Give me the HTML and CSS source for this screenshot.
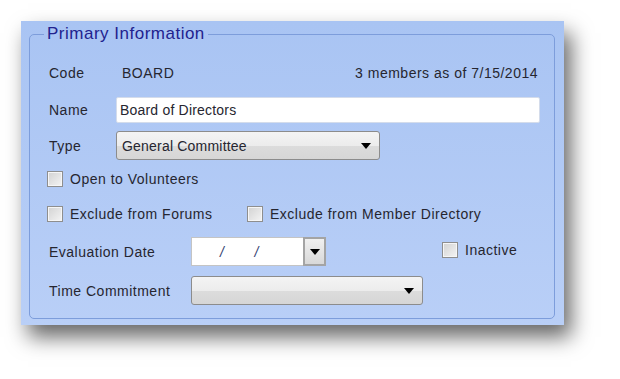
FILE: index.html
```html
<!DOCTYPE html>
<html lang="en">
<head>
    <meta charset="UTF-8">
    <title>Committee - Primary Information</title>
    <link rel="stylesheet" href="styles.css">
</head>
<body>

    <div class="panel">
        <fieldset class="group">
            <legend>Primary Information</legend>

            <div class="row row-code">
                <span class="label label-code">Code</span>
                <span class="value">BOARD</span>
                <span class="members">3 members as of 7/15/2014</span>
            </div>

            <div class="row row-name">
                <span class="label label-short">Name</span>
                <div class="textbox">Board of Directors</div>
            </div>

            <div class="row row-type">
                <span class="label label-short">Type</span>
                <div class="combo combo-type">
                    <span class="combo-text">General Committee</span>
                    <span class="arrow"></span>
                </div>
            </div>

            <div class="row row-open">
                <label class="check"><span class="box"></span>Open to Volunteers</label>
            </div>

            <div class="row row-exclude">
                <label class="check check-forums"><span class="box"></span>Exclude from Forums</label>
                <label class="check"><span class="box"></span>Exclude from Member Directory</label>
            </div>

            <div class="row row-eval">
                <span class="label label-long">Evaluation Date</span>
                <div class="datebox">
                    <div class="date-text"><span>/</span><span>/</span></div>
                    <div class="date-btn"><span class="arrow"></span></div>
                </div>
                <label class="check check-inactive"><span class="box"></span>Inactive</label>
            </div>

            <div class="row row-time">
                <span class="label label-long">Time Commitment</span>
                <div class="combo combo-time">
                    <span class="combo-text"></span>
                    <span class="arrow"></span>
                </div>
            </div>
        </fieldset>
    </div>

</body>
</html>
```

FILE: styles.css
```css
* {
    margin: 0;
    padding: 0;
    box-sizing: border-box;
}

html,
body {
    min-height: 100%;
}

body {
    font-family: 'Liberation Sans', Arial, sans-serif;
    font-size: 14px;
    letter-spacing: 0.5px;
    color: #262630;
    background: #fff;
    padding: 21px 0 0 21px;
    min-height: 100vh;
}

.panel {
    width: 543px;
    height: 304px;
    padding: 4px 9px 0 8px;
    background: linear-gradient(#a9c4f3, #b9cff7);
    box-shadow: 7px 12px 20px rgba(0, 0, 0, 0.6);
}

.group {
    height: 294px;
    border: 1px solid #7d9ddb;
    border-radius: 5px;
    padding: 0 0 0 17px;
}

.group legend {
    font-size: 17px;
    line-height: 18px;
    color: #22228e;
    padding: 0 3px;
    margin-left: -3px;
}

.row {
    display: flex;
    align-items: center;
}

.label {
    padding-left: 2px;
}

.label-short {
    width: 69px;
}

.label-code {
    width: 75px;
}

.label-long {
    width: 144px;
}

.row-code {
    height: 24px;
    margin-top: 18px;
}

.members {
    margin-left: auto;
    margin-right: 16px;
}

.row-name {
    margin-top: 12px;
}

.textbox {
    width: 424px;
    height: 26px;
    line-height: 24px;
    padding-left: 3px;
    background: #fff;
    border: 1px solid #d4dceb;
    border-radius: 2px;
    letter-spacing: 0.2px;
}

.row-type {
    margin-top: 8px;
}

.combo {
    display: flex;
    align-items: center;
    height: 29px;
    padding: 0 8px 0 5px;
    border: 1px solid #8c8c8c;
    border-radius: 3px;
    background: linear-gradient(#f4f4f4, #ececec 50%, #dcdcdc 51%, #d6d6d6);
    letter-spacing: 0.2px;
}

.combo-type {
    width: 264px;
}

.combo-time {
    width: 232px;
}

.combo-text {
    flex: 1;
}

.arrow {
    width: 0;
    height: 0;
    border-left: 5px solid transparent;
    border-right: 5px solid transparent;
    border-top: 6px solid #000;
}

.check {
    display: flex;
    align-items: center;
}

.box {
    width: 16px;
    height: 16px;
    margin-right: 7px;
    border: 1px solid #8e8e8e;
    box-shadow: inset 0 0 0 1px #f6f6f6;
    background: linear-gradient(135deg, #d2d2d2, #f4f4f4);
}

.row-open {
    height: 18px;
    margin-top: 10px;
}

.row-exclude {
    height: 18px;
    margin-top: 17px;
}

.check-forums {
    width: 200px;
}

.row-eval {
    margin-top: 14px;
}

.datebox {
    display: flex;
    width: 135px;
    height: 29px;
}

.date-text {
    flex: 1;
    display: flex;
    align-items: center;
    gap: 30px;
    padding-left: 28px;
    background: #fff;
    border: 1px solid #c4c4c4;
    border-right: none;
    color: #334070;
    font-style: italic;
}

.date-btn {
    width: 23px;
    display: flex;
    align-items: center;
    justify-content: center;
    border: 2px solid #a4a4a4;
    background: linear-gradient(#f0f0f0, #d8d8d8);
}

.check-inactive {
    margin-left: 116px;
    margin-top: -4px;
}

.row-time {
    margin-top: 10px;
}
```
